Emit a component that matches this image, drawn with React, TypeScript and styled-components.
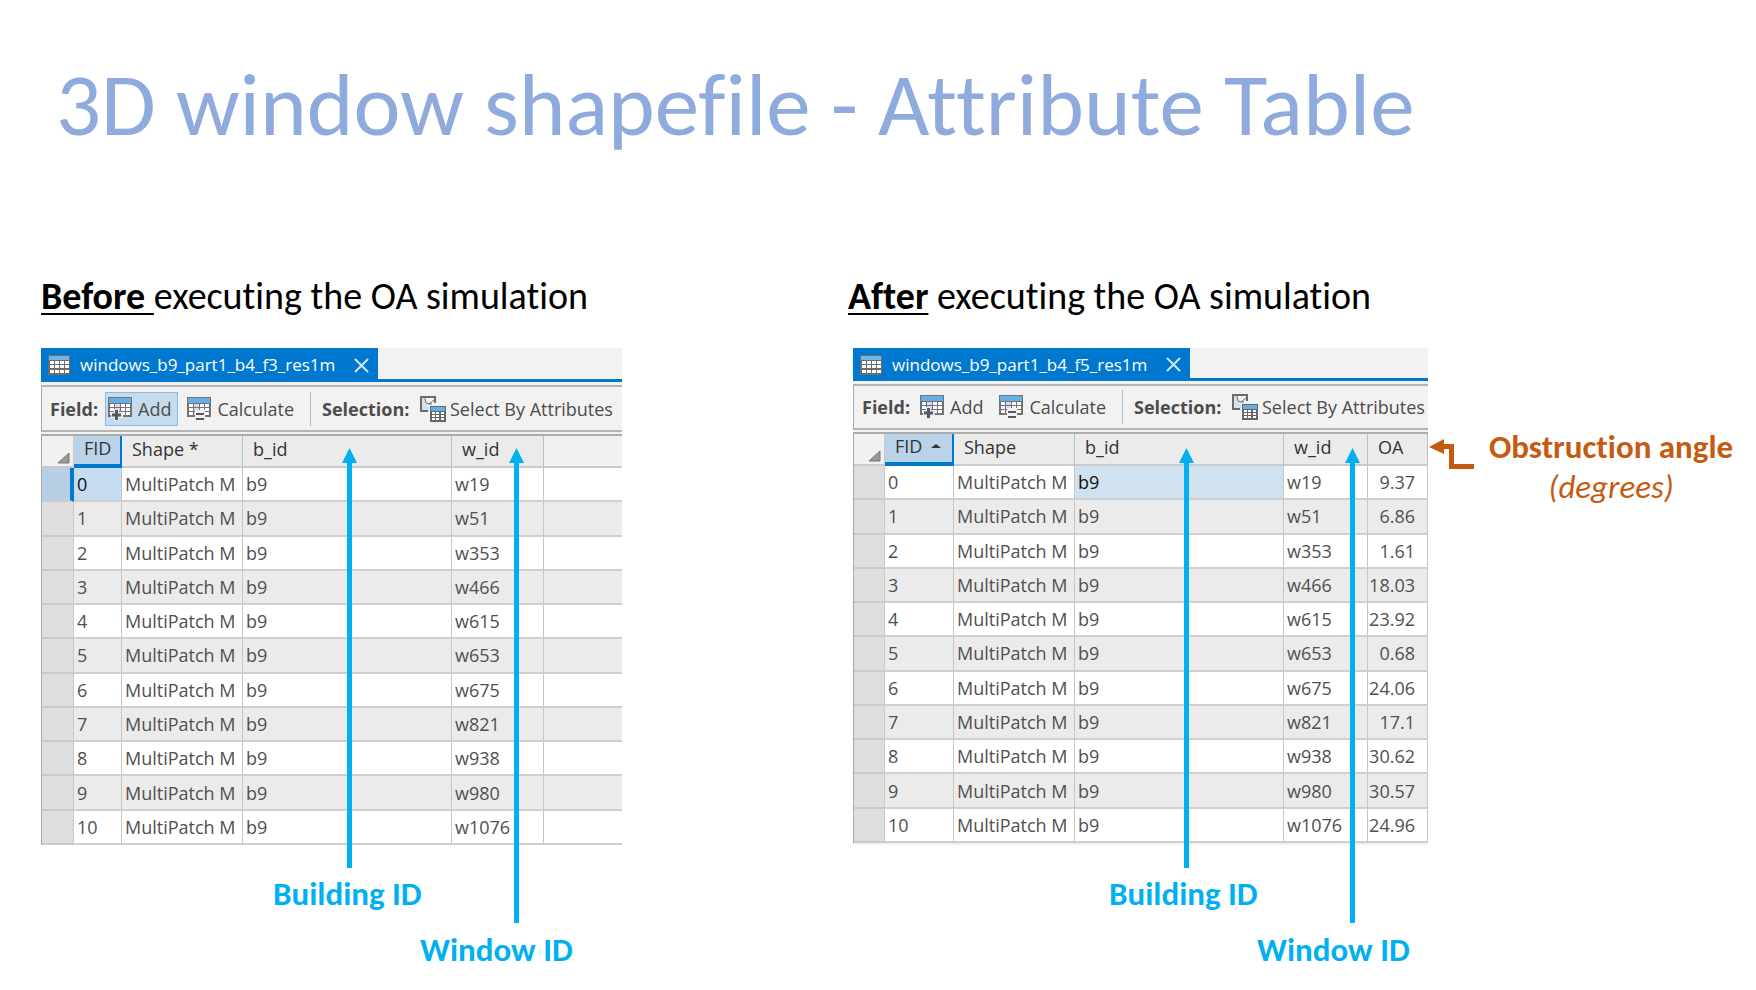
import React from 'react';
import styled, { createGlobalStyle } from 'styled-components';

const SLIDE_FONT = 'Carlito, Calibri, Lato, sans-serif';
const APP_FONT = '"Open Sans", "Noto Sans", sans-serif';
const BLUE = '#0078d0';
const SKY = '#00b0f0';
const RUST = '#c55a11';

const GlobalStyle = createGlobalStyle`
  *, *::before, *::after { box-sizing: border-box; }
  body {
    margin: 0;
    background: #fff;
    font-family: ${SLIDE_FONT};
    font-variant-ligatures: none;
  }
`;

const Slide = styled.main`
  padding: 51px 0 0 41px;
`;

const Title = styled.h1`
  margin: 0;
  padding-left: 15px;
  color: #8faadc;
  font-size: 89px;
  font-weight: 400;
  line-height: 108px;
`;

const Comparison = styled.div`
  display: grid;
  grid-template-columns: minmax(581px, 807fr) minmax(900px, 908fr);
  margin-top: 113px;
`;

const Column = styled.section``;

const Heading = styled.h2`
  margin: 0 0 28px;
  font-size: 38px;
  font-weight: 400;
  line-height: 48px;
  white-space: pre;
`;

const Underlined = styled.strong`
  text-decoration: underline;
  text-decoration-thickness: 2px;
  text-underline-offset: 4px;
`;

const Stage = styled.div<{ $indent?: boolean }>`
  display: flex;
  align-items: flex-start;
  padding-left: ${(p) => (p.$indent ? '5px' : '0')};
`;

const Figure = styled.div<{ $width: number }>`
  position: relative;
  flex: none;
  width: ${(p) => p.$width}px;
`;

const Panel = styled.div<{ $short?: boolean }>`
  padding-bottom: ${(p) => (p.$short ? '2px' : '0')};
  background: #f2f2f2;
  font-family: ${APP_FONT};
  color: #4c4c4c;
`;

const TabStrip = styled.div<{ $short?: boolean }>`
  display: flex;
  height: ${(p) => (p.$short ? '33px' : '34px')};
  border-bottom: 3px solid ${BLUE};
`;

const Tab = styled.div<{ $short?: boolean }>`
  display: flex;
  align-items: center;
  width: 337px;
  height: ${(p) => (p.$short ? '33px' : '34px')};
  padding: 0 9px 0 7px;
  background: ${BLUE};
  color: #fff;
  font-size: 17px;
  line-height: 24px;
`;

const TabName = styled.span`
  flex: 1;
  padding-left: 10px;
`;

const CloseButton = styled.button`
  display: flex;
  padding: 0;
  border: 0;
  background: none;
`;

const Toolbar = styled.div<{ $short?: boolean }>`
  display: flex;
  align-items: center;
  height: ${(p) => (p.$short ? '46px' : '47px')};
  margin: 3px 0 2px;
  padding-left: 8px;
  border: 2px solid #b4b4b4;
  border-left: 1px solid #a8a8a8;
  border-right: 0;
  font-size: 18px;
  line-height: 24px;
  white-space: nowrap;

  > * { flex: none; }
`;

const GroupLabel = styled.span<{ $width: number }>`
  width: ${(p) => p.$width}px;
  font-weight: 700;
`;

const ToolButton = styled.button<{ $active?: boolean; $gap: number }>`
  display: flex;
  align-items: center;
  gap: ${(p) => p.$gap}px;
  height: 34px;
  padding: 0 6px 0 2px;
  border: 1px solid ${(p) => (p.$active ? '#84bce6' : 'transparent')};
  background: ${(p) => (p.$active ? '#c6dcee' : 'none')};
  color: inherit;
  font: inherit;

  &:last-child { padding-right: 0; }
`;

const Separator = styled.span`
  width: 1px;
  height: 34px;
  margin: 0 11px 0 auto;
  background: #b8b8b8;
`;

const FieldTools = styled.div`
  display: flex;
  align-items: center;
  width: 272px;
  gap: 6px;
`;

const DataTable = styled.table`
  width: 100%;
  height: 411px;
  table-layout: fixed;
  border-collapse: separate;
  border-spacing: 0;
  border-top: 2px solid #acacac;
  border-left: 1px solid #a8a8a8;
  font-size: 18px;
  line-height: 24px;
`;

const HeadRow = styled.tr`
  height: 32px;
`;

const HeadCell = styled.th<{ $sorted?: boolean; $blank?: boolean }>`
  padding: 0 0 4px 10px;
  border-right: ${(p) => (p.$sorted ? `2px solid ${BLUE}` : p.$blank ? '0' : '1px solid #bfbfbf')};
  border-bottom: ${(p) => (p.$sorted ? `4px solid ${BLUE}` : '2px solid #cacaca')};
  background: ${(p) => (p.$sorted ? '#bad3e8' : p.$blank ? '#f1f1f1' : '#ebebeb')};
  color: #333;
  font-weight: 400;
  line-height: 22px;
  text-align: left;
  white-space: nowrap;
`;

const CornerCell = styled.th`
  padding: 0 3px 2px 0;
  border-right: 1px solid #cacaca;
  border-bottom: 2px solid #cacaca;
  background: #f1f1f1;
  vertical-align: bottom;

  svg { display: block; margin-left: auto; }
`;

const BodyRow = styled.tr`
  background: #fff;
  &:nth-child(even) { background: #ebebeb; }
`;

const Cell = styled.td<{ $numeric?: boolean; $tone?: 'current' | 'picked'; $last?: boolean }>`
  padding: ${(p) => (p.$numeric ? '0 12px 0 0' : '0 0 0 3px')};
  border-right: ${(p) => (p.$last ? '0' : '1px solid #c6c6c6')};
  border-bottom: 2px solid #cfcfcf;
  background: ${(p) => (p.$tone === 'current' ? '#c6dcf0' : p.$tone === 'picked' ? '#d0e2f0' : 'inherit')};
  color: ${(p) => (p.$tone ? '#111' : '#505050')};
  text-align: ${(p) => (p.$numeric ? 'right' : 'left')};
  white-space: nowrap;
`;

const RowMarker = styled.td<{ $current?: boolean }>`
  padding: 0;
  border-right: ${(p) => (p.$current ? `4px solid ${BLUE}` : '1px solid #cacaca')};
  border-bottom: 2px solid #cacaca;
  background: ${(p) => (p.$current ? '#b8d0e6' : '#dedede')};
`;

const HeadLabel = styled.span`
  display: inline-flex;
  align-items: center;
  gap: 8px;
`;

/* Pointer laid over the table, rising from a label to a column header. */
const Pointer = styled.span<{ $x: number; $length: number }>`
  position: absolute;
  top: 100px;
  left: ${(p) => p.$x}px;
  width: 15px;
  height: ${(p) => p.$length}px;
  background: linear-gradient(${SKY}, ${SKY}) center bottom / 5px calc(100% - 10px) no-repeat;

  &::before {
    content: '';
    display: block;
    height: 15px;
    background: ${SKY};
    clip-path: polygon(50% 0, 100% 100%, 0 100%);
  }
`;

const Legend = styled.dl`
  margin: 29px 0 0;
  color: ${SKY};
  font-size: 33px;
  font-weight: 700;
  line-height: 40px;
`;

const LegendItem = styled.dt<{ $indent: number }>`
  margin-bottom: 16px;
  padding-left: ${(p) => p.$indent}px;
  white-space: nowrap;
`;

const Callout = styled.aside`
  display: flex;
  align-items: flex-start;
  padding: 79px 0 0 1px;
  color: ${RUST};
  font-size: 33px;
  line-height: 40px;

  svg { flex: none; margin: 12px 15px 0 0; }
`;

const CalloutText = styled.p`
  margin: 0;
  text-align: center;
  white-space: nowrap;
`;

const Degrees = styled.em`
  display: block;
`;

const TableIcon = () => (
  <svg width="22" height="20" viewBox="0 0 22 20" aria-hidden="true">
    <rect width="22" height="20" fill="#6d6d6d" />
    <rect x="1" y="1" width="20" height="4" fill="#6fb7ea" />
    {[6, 10, 15].map((y) =>
      [2, 7, 12, 17].map((x) => <rect key={`${x}-${y}`} x={x} y={y} width="4" height="3" fill="#fff" />),
    )}
  </svg>
);

const FieldIcon = ({ kind }: { kind: 'add' | 'calculate' }) => (
  <svg width="24" height="24" viewBox="0 0 24 24" aria-hidden="true">
    <path d="M0 0h24v20H0z" fill="#737373" />
    <rect x="1" y="1" width="22" height="5" fill="#64b0e6" />
    {[7, 11, 15].map((y) =>
      [2, 7, 13, 18].map((x) => (
        <rect key={`${x}-${y}`} x={x} y={y} width={x === 7 ? 5 : 4} height="3" fill={x === 7 ? '#ddd8f0' : '#fff'} />
      )),
    )}
    <path
      d={kind === 'add' ? 'M3 15h3v-3h5v3h4v6h-4v3H6v-3H3z' : 'M8 13h10v11H8z'}
      fill={kind === 'add' ? '#e4ecf4' : '#f2f2f2'}
    />
    <path
      d={kind === 'add' ? 'M8.500 13v10M4 18h9' : 'M9 17h8M9 22h8'}
      stroke="#595959"
      strokeWidth={kind === 'add' ? 3 : 2}
    />
  </svg>
);

const SelectIcon = () => (
  <svg width="26" height="26" viewBox="0 0 26 26" aria-hidden="true">
    <path d="M1 1h15v7h-6v8H1z" fill="#f4f4f4" />
    <path d="M1 1h4v6l4 2v7H1z" fill="#cfe4f5" />
    <path d="M8 15H1V1h14v6" fill="none" stroke="#6b6b6b" strokeWidth="2" />
    <path d="M5 2l1 5 3 1 5-4M9 8h3" fill="none" stroke="#6b6b6b" />
    <rect x="10" y="10" width="16" height="16" fill="#666" />
    <rect x="11" y="11" width="14" height="4" fill="#64b0e6" />
    {[16, 19, 22].map((y) =>
      [12, 16, 21].map((x) => <rect key={`${x}-${y}`} x={x} y={y} width="3" height="2" fill="#fff" />),
    )}
  </svg>
);

const CloseIcon = () => (
  <svg width="15" height="15" viewBox="0 0 15 15" aria-hidden="true">
    <path d="M1 1l13 13M14 1L1 14" stroke="#cfe6f8" strokeWidth="2" />
  </svg>
);

const CornerIcon = () => (
  <svg width="13" height="12" viewBox="0 0 13 12" aria-hidden="true">
    <path d="M12 1v10H1z" fill="#999" stroke="#777" />
  </svg>
);

const SortIcon = () => (
  <svg width="12" height="6" viewBox="0 0 12 6" aria-hidden="true">
    <path d="M6 1l5 4H1z" fill="#333" />
  </svg>
);

const ElbowArrow = () => (
  <svg width="45" height="32" viewBox="0 0 45 32" aria-hidden="true">
    <path d="M0 8L15 0v5h10v20h20v5H20V10h-5v5z" fill={RUST} />
  </svg>
);

const windowIds = ['w19', 'w51', 'w353', 'w466', 'w615', 'w653', 'w675', 'w821', 'w938', 'w980', 'w1076'];
const angles = ['9.37', '6.86', '1.61', '18.03', '23.92', '0.68', '24.06', '17.1', '30.62', '30.57', '24.96'];

interface PanelProps {
  name: string;
  after?: boolean;
  columns: number[];
}

const AttributePanel = ({ name, after, columns }: PanelProps) => (
  <Panel $short={after}>
    <TabStrip $short={after}>
      <Tab $short={after}>
        <TableIcon />
        <TabName>{name}</TabName>
        <CloseButton aria-label="Close tab"><CloseIcon /></CloseButton>
      </Tab>
    </TabStrip>
    <Toolbar $short={after}>
      <FieldTools>
        <GroupLabel $width={49}>Field:</GroupLabel>
        <ToolButton $active={!after} $gap={6}><FieldIcon kind="add" />Add</ToolButton>
        <ToolButton $gap={6}><FieldIcon kind="calculate" />Calculate</ToolButton>
        <Separator />
      </FieldTools>
      <GroupLabel $width={95}>Selection:</GroupLabel>
      <ToolButton $gap={4}><SelectIcon />Select By Attributes</ToolButton>
    </Toolbar>
    <DataTable>
      <colgroup>
        {columns.map((width, i) => <col key={i} width={width} />)}
      </colgroup>
      <thead>
        <HeadRow>
          <CornerCell><CornerIcon /></CornerCell>
          <HeadCell $sorted><HeadLabel>FID{after && <SortIcon />}</HeadLabel></HeadCell>
          <HeadCell>{after ? 'Shape' : 'Shape *'}</HeadCell>
          <HeadCell>b_id</HeadCell>
          <HeadCell>w_id</HeadCell>
          {after ? <HeadCell>OA</HeadCell> : <HeadCell $blank />}
        </HeadRow>
      </thead>
      <tbody>
        {windowIds.map((id, i) => (
          <BodyRow key={id}>
            <RowMarker $current={!after && i === 0} />
            <Cell $tone={!after && i === 0 ? 'current' : undefined}>{i}</Cell>
            <Cell>MultiPatch M</Cell>
            <Cell $tone={after && i === 0 ? 'picked' : undefined}>b9</Cell>
            <Cell>{id}</Cell>
            {after ? <Cell $numeric>{angles[i]}</Cell> : <Cell $last />}
          </BodyRow>
        ))}
      </tbody>
    </DataTable>
  </Panel>
);

export default function App() {
  return (
    <>
      <GlobalStyle />
      <Slide>
        <Title>3D window shapefile - Attribute Table</Title>
        <Comparison>
          <Column>
            <Heading><Underlined>Before </Underlined>executing the OA simulation</Heading>
            <Stage>
              <Figure $width={581}>
                <AttributePanel name="windows_b9_part1_b4_f3_res1m" columns={[32, 48, 121, 209, 92, 78]} />
                <Pointer $x={301} $length={420} />
                <Pointer $x={468} $length={475} />
                <Legend>
                  <LegendItem $indent={232}>Building ID</LegendItem>
                  <LegendItem $indent={379}>Window ID</LegendItem>
                </Legend>
              </Figure>
            </Stage>
          </Column>
          <Column>
            <Heading><Underlined>After</Underlined> executing the OA simulation</Heading>
            <Stage $indent>
              <Figure $width={575}>
                <AttributePanel name="windows_b9_part1_b4_f5_res1m" after columns={[31, 69, 121, 209, 84, 60]} />
                <Pointer $x={326} $length={420} />
                <Pointer $x={492} $length={475} />
                <Legend>
                  <LegendItem $indent={256}>Building ID</LegendItem>
                  <LegendItem $indent={404}>Window ID</LegendItem>
                </Legend>
              </Figure>
              <Callout>
                <ElbowArrow />
                <CalloutText>
                  <strong>Obstruction angle</strong>
                  <Degrees>(degrees)</Degrees>
                </CalloutText>
              </Callout>
            </Stage>
          </Column>
        </Comparison>
      </Slide>
    </>
  );
}
